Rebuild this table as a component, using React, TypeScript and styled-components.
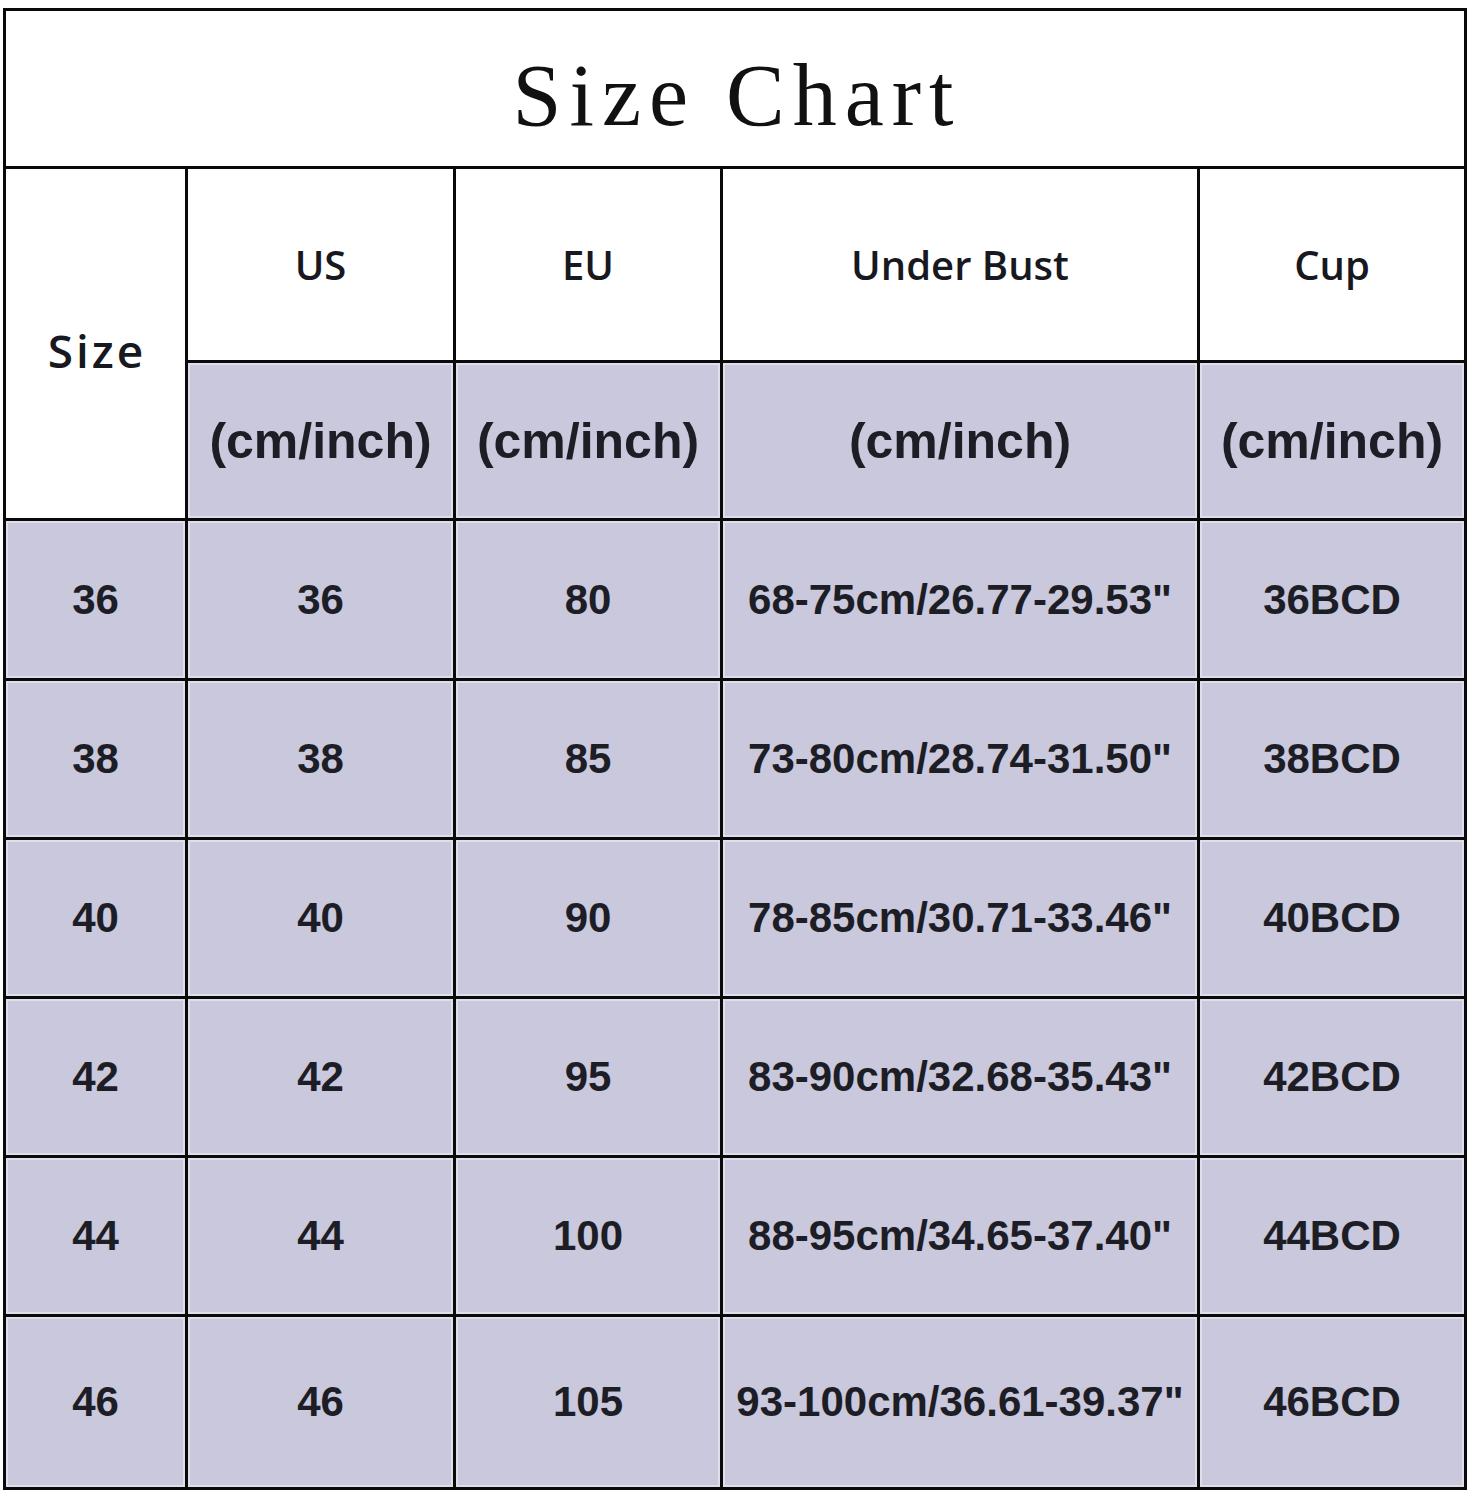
import React from 'react';
import styled, { createGlobalStyle } from 'styled-components';

const GlobalStyle = createGlobalStyle`
    html, body {
        margin: 0;
        padding: 0;
        background: #ffffff;
    }
`;

const LAVENDER = '#c9c8dc';
const INK = '#1d1d26';

const Page = styled.div`
    width: 1478px;
    height: 1500px;
    padding: 8px 0 0 3px;
    box-sizing: border-box;
    background: #ffffff;
`;

const Chart = styled.div`
    display: grid;
    grid-template-columns: 179px 265px 264px 474px 264px;
    grid-template-rows: 155px 191px 155px 157px 156px 156px 156px 156px 170px;
    gap: 3px;
    padding: 3px;
    width: max-content;
    background: #0a0a0a;
`;

const Cell = styled.div<{ $shade?: boolean }>`
    display: flex;
    align-items: center;
    justify-content: center;
    background: ${(p) => (p.$shade ? LAVENDER : '#ffffff')};
    box-shadow: ${(p) => (p.$shade ? 'inset 0 0 0 2px rgba(240, 240, 248, 0.55)' : 'none')};
    color: ${INK};
    white-space: nowrap;
`;

const TitleCell = styled(Cell)`
    grid-column: 1 / -1;
    padding-top: 14px;
    padding-left: 4px;
    box-sizing: border-box;
    font-family: 'Liberation Serif', 'DejaVu Serif', serif;
    font-size: 88px;
    letter-spacing: 8px;
    color: #111;
`;

const SizeHead = styled(Cell)`
    grid-row: span 2;
    padding-top: 12px;
    padding-left: 3px;
    box-sizing: border-box;
    font-family: 'Open Sans', 'DejaVu Sans', sans-serif;
    font-weight: 600;
    font-size: 46px;
    letter-spacing: 3px;
    color: #181820;
`;

const HeadCell = styled(Cell)`
    font-family: 'Open Sans', 'DejaVu Sans', sans-serif;
    font-weight: 600;
    font-size: 40px;
    color: #181820;
`;

const UnitCell = styled(Cell)`
    font-family: 'Liberation Sans', Arial, sans-serif;
    font-weight: 700;
    font-size: 50px;
`;

const DataCell = styled(Cell)`
    font-family: 'Liberation Sans', Arial, sans-serif;
    font-weight: 700;
    font-size: 42px;
`;

const headers = ['US', 'EU', 'Under Bust', 'Cup'];

const rows = [
    ['36', '36', '80', '68-75cm/26.77-29.53"', '36BCD'],
    ['38', '38', '85', '73-80cm/28.74-31.50"', '38BCD'],
    ['40', '40', '90', '78-85cm/30.71-33.46"', '40BCD'],
    ['42', '42', '95', '83-90cm/32.68-35.43"', '42BCD'],
    ['44', '44', '100', '88-95cm/34.65-37.40"', '44BCD'],
    ['46', '46', '105', '93-100cm/36.61-39.37"', '46BCD'],
];

const App: React.FC = () => {
    return (
        <Page>
            <GlobalStyle />
            <Chart>
                <TitleCell>Size Chart</TitleCell>

                <SizeHead>Size</SizeHead>
                {headers.map((h) => (
                    <HeadCell key={h}>{h}</HeadCell>
                ))}
                {headers.map((h) => (
                    <UnitCell key={h + '-unit'} $shade>
                        (cm/inch)
                    </UnitCell>
                ))}

                {rows.map((row) =>
                    row.map((value, i) => (
                        <DataCell key={row[0] + '-' + i} $shade>
                            {value}
                        </DataCell>
                    ))
                )}
            </Chart>
        </Page>
    );
};

export default App;
